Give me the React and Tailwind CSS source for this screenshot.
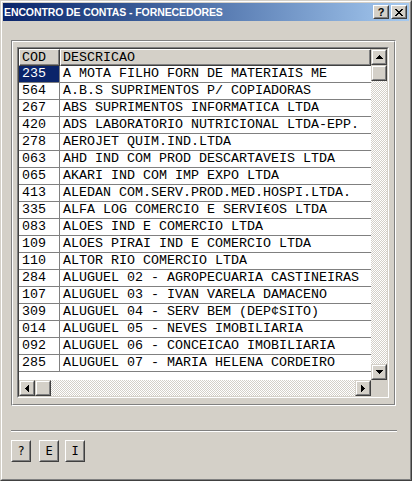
import React from "react";

const rows = [
  ["235", "A MOTA FILHO FORN DE MATERIAIS ME"],
  ["564", "A.B.S SUPRIMENTOS P/ COPIADORAS"],
  ["267", "ABS SUPRIMENTOS INFORMATICA LTDA"],
  ["420", "ADS LABORATORIO NUTRICIONAL LTDA-EPP."],
  ["278", "AEROJET QUIM.IND.LTDA"],
  ["063", "AHD IND COM PROD DESCARTAVEIS LTDA"],
  ["065", "AKARI IND COM IMP EXPO LTDA"],
  ["413", "ALEDAN COM.SERV.PROD.MED.HOSPI.LTDA."],
  ["335", "ALFA LOG COMERCIO E SERVI€OS LTDA"],
  ["083", "ALOES IND E COMERCIO LTDA"],
  ["109", "ALOES PIRAI IND E COMERCIO LTDA"],
  ["110", "ALTOR RIO COMERCIO LTDA"],
  ["284", "ALUGUEL 02 - AGROPECUARIA CASTINEIRAS"],
  ["107", "ALUGUEL 03 - IVAN VARELA DAMACENO"],
  ["309", "ALUGUEL 04 - SERV BEM (DEP¢SITO)"],
  ["014", "ALUGUEL 05 - NEVES IMOBILIARIA"],
  ["092", "ALUGUEL 06 - CONCEICAO IMOBILIARIA"],
  ["285", "ALUGUEL 07 - MARIA HELENA CORDEIRO"],
];

function SbButton({ children, className = "" }) {
  return (
    <div
      className={
        "w-[16px] h-[16px] shrink-0 bg-[#d4d0c8] border border-t-[#d4d0c8] border-l-[#d4d0c8] border-r-[#404040] border-b-[#404040] " +
        className
      }
    >
      <div className="w-full h-full border border-t-white border-l-white border-r-[#808080] border-b-[#808080] flex items-center justify-center">
        {children}
      </div>
    </div>
  );
}

function Arrow({ dir }) {
  if (dir === "up")
    return (
      <svg width="7" height="4" shapeRendering="crispEdges">
        <rect x="3" y="0" width="1" height="1" fill="#000" />
        <rect x="2" y="1" width="3" height="1" fill="#000" />
        <rect x="1" y="2" width="5" height="1" fill="#000" />
        <rect x="0" y="3" width="7" height="1" fill="#000" />
      </svg>
    );
  if (dir === "down")
    return (
      <svg width="7" height="4" shapeRendering="crispEdges">
        <rect x="0" y="0" width="7" height="1" fill="#000" />
        <rect x="1" y="1" width="5" height="1" fill="#000" />
        <rect x="2" y="2" width="3" height="1" fill="#000" />
        <rect x="3" y="3" width="1" height="1" fill="#000" />
      </svg>
    );
  if (dir === "left")
    return (
      <svg width="4" height="7" shapeRendering="crispEdges">
        <rect x="0" y="3" width="1" height="1" fill="#000" />
        <rect x="1" y="2" width="1" height="3" fill="#000" />
        <rect x="2" y="1" width="1" height="5" fill="#000" />
        <rect x="3" y="0" width="1" height="7" fill="#000" />
      </svg>
    );
  return (
    <svg width="4" height="7" shapeRendering="crispEdges">
      <rect x="0" y="0" width="1" height="7" fill="#000" />
      <rect x="1" y="1" width="1" height="5" fill="#000" />
      <rect x="2" y="2" width="1" height="3" fill="#000" />
      <rect x="3" y="3" width="1" height="1" fill="#000" />
    </svg>
  );
}

function CapBtn({ children, className = "" }) {
  return (
    <div
      className={
        "w-[16px] h-[14px] bg-[#d4d0c8] border border-t-white border-l-white border-r-[#404040] border-b-[#404040] " +
        className
      }
    >
      <div className="w-full h-full border border-t-[#d4d0c8] border-l-[#d4d0c8] border-r-[#808080] border-b-[#808080] flex items-center justify-center">
        {children}
      </div>
    </div>
  );
}

function PushBtn({ children, className = "" }) {
  return (
    <div
      className={
        "w-[20px] h-[22px] bg-[#d4d0c8] border border-t-white border-l-white border-r-[#404040] border-b-[#404040] " +
        className
      }
    >
      <div className="w-full h-full border border-t-[#d4d0c8] border-l-[#d4d0c8] border-r-[#808080] border-b-[#808080] flex items-center justify-center font-['DejaVu_Sans_Mono',monospace] text-[12px] text-black leading-none">
        {children}
      </div>
    </div>
  );
}

function XGlyph() {
  return (
    <svg width="8" height="7" shapeRendering="crispEdges">
      <rect x="0" y="0" width="2" height="1" fill="#000" />
      <rect x="6" y="0" width="2" height="1" fill="#000" />
      <rect x="1" y="1" width="2" height="1" fill="#000" />
      <rect x="5" y="1" width="2" height="1" fill="#000" />
      <rect x="2" y="2" width="4" height="1" fill="#000" />
      <rect x="3" y="3" width="2" height="1" fill="#000" />
      <rect x="2" y="4" width="4" height="1" fill="#000" />
      <rect x="1" y="5" width="2" height="1" fill="#000" />
      <rect x="5" y="5" width="2" height="1" fill="#000" />
      <rect x="0" y="6" width="2" height="1" fill="#000" />
      <rect x="6" y="6" width="2" height="1" fill="#000" />
    </svg>
  );
}

const checker =
  "bg-[repeating-conic-gradient(#d4d0c8_0_25%,#ffffff_0_50%)] bg-[length:2px_2px]";

export default function App() {
  return (
    <div className="w-[412px] h-[481px] bg-[#d4d0c8] border border-t-[#d4d0c8] border-l-[#d4d0c8] border-r-[#404040] border-b-[#404040] font-['Liberation_Sans',Arial,sans-serif]">
      <div className="h-full border border-t-white border-l-white border-r-[#808080] border-b-[#808080] p-px flex flex-col">
        {/* Title bar */}
        <div className="h-[18px] shrink-0 flex items-center bg-linear-to-r from-[#0a246a] to-[#a6caf0] pl-px pr-[2px]">
          <span className="flex-1 text-white font-bold text-[10.5px] tracking-[-0.1px] leading-[18px] whitespace-nowrap">
            ENCONTRO DE CONTAS - FORNECEDORES
          </span>
          <CapBtn>
            <span className="text-[11px] font-bold leading-none text-black">?</span>
          </CapBtn>
          <CapBtn className="ml-[2px]">
            <XGlyph />
          </CapBtn>
        </div>

        {/* Frame */}
        <div className="ml-[8px] mt-[19px] w-[385px] h-[366px] shrink-0 border border-t-[#808080] border-l-[#808080] border-r-white border-b-white">
          <div className="h-full border border-t-white border-l-white border-r-[#808080] border-b-[#808080] pl-[4px] pt-[5px]">
            {/* Grid control */}
            <div className="w-[372px] border border-t-[#808080] border-l-[#808080] border-r-white border-b-white">
              <div className="border border-t-[#404040] border-l-[#404040] border-r-[#d4d0c8] border-b-[#d4d0c8] bg-white">
                <div className="flex">
                  <div className="w-[352px] h-[331px] flex flex-col font-['Liberation_Mono','Courier_New',monospace] text-[13.333px] text-black overflow-hidden">
                    {/* Header */}
                    <div className="flex h-[17px] shrink-0 bg-[#d4d0c8]">
                      <div className="w-[41px] h-full border border-t-white border-l-white border-r-[#404040] border-b-[#404040]">
                        <div className="h-full border-r border-b border-r-[#808080] border-b-[#808080] pl-[2px] leading-[15px]">
                          COD
                        </div>
                      </div>
                      <div className="w-[311px] h-full border border-t-white border-l-white border-r-[#404040] border-b-[#404040]">
                        <div className="h-full border-r border-b border-r-[#808080] border-b-[#808080] pl-[2px] leading-[15px]">
                          DESCRICAO
                        </div>
                      </div>
                    </div>
                    {/* Rows */}
                    {rows.map(([cod, desc], i) => (
                      <div
                        key={cod}
                        className="flex h-[17px] shrink-0 border-b border-b-[#808080] whitespace-nowrap"
                      >
                        <div
                          className={
                            "w-[41px] h-full border-r border-r-[#808080] pl-[3px] leading-[16px] " +
                            (i === 0 ? "bg-[#0a246a] text-white" : "")
                          }
                        >
                          {cod}
                        </div>
                        <div className="w-[311px] h-full pl-[3px] leading-[16px] overflow-hidden">
                          {desc}
                        </div>
                      </div>
                    ))}
                    <div className="flex-1 bg-white" />
                  </div>
                  {/* Vertical scrollbar */}
                  <div className="w-[16px] h-[331px] flex flex-col">
                    <SbButton>
                      <Arrow dir="up" />
                    </SbButton>
                    <SbButton />
                    <div className={"flex-1 " + checker} />
                    <SbButton>
                      <Arrow dir="down" />
                    </SbButton>
                  </div>
                </div>
                {/* Horizontal scrollbar */}
                <div className="flex h-[16px]">
                  <div className="w-[352px] h-[16px] flex">
                    <SbButton>
                      <Arrow dir="left" />
                    </SbButton>
                    <SbButton />
                    <div className={"flex-1 " + checker} />
                    <SbButton>
                      <Arrow dir="right" />
                    </SbButton>
                  </div>
                  <div className="w-[16px] h-[16px] bg-[#d4d0c8]" />
                </div>
              </div>
            </div>
          </div>
        </div>

        {/* Separator */}
        <div className="ml-[8px] mt-[24px] w-[386px] h-[2px] shrink-0 border-t border-b border-t-[#808080] border-b-white" />

        {/* Buttons */}
        <div className="flex ml-[8px] mt-[8px]">
          <PushBtn>?</PushBtn>
          <PushBtn className="ml-[8px]">E</PushBtn>
          <PushBtn className="ml-[6px]">I</PushBtn>
        </div>
      </div>
    </div>
  );
}
